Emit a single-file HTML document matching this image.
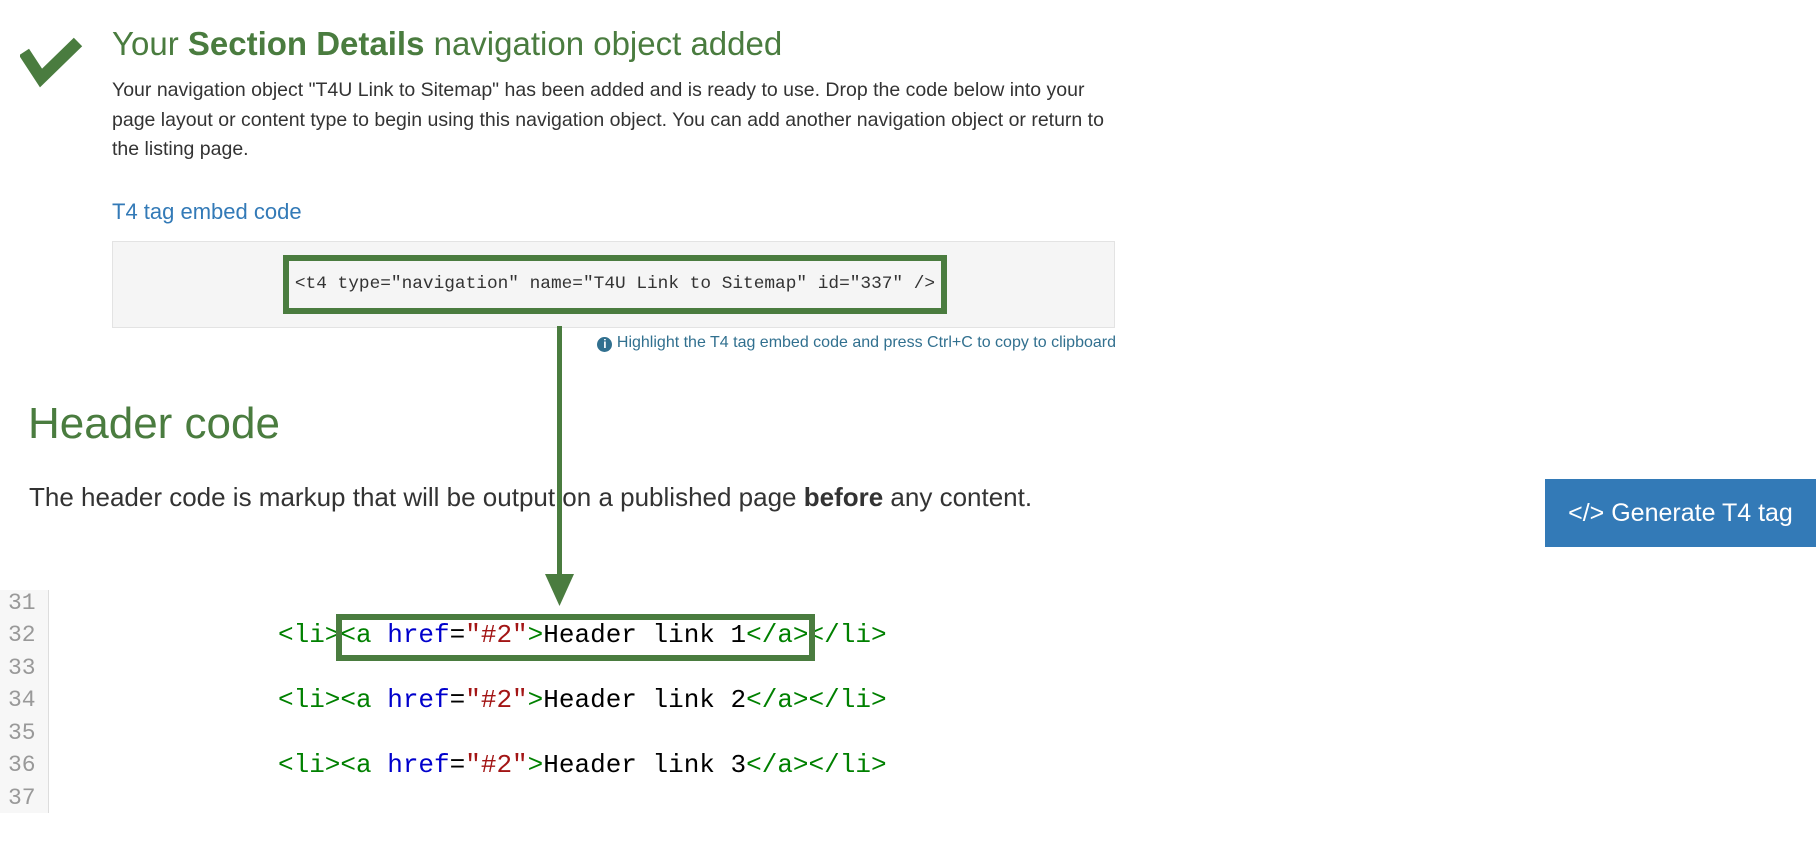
<!DOCTYPE html>
<html><head><meta charset="utf-8"><style>
body{margin:0;width:1816px;height:850px;background:#fff;position:relative;overflow:hidden;font-family:"Liberation Sans",Arial,sans-serif;}
.a{position:absolute;white-space:nowrap;}
.title{left:112px;top:25px;font-size:33px;color:#4a7c3f;}
.p{left:112px;top:76px;font-size:19.5px;line-height:29.6px;color:#333;width:1012px;white-space:normal;}
.sub{left:112px;top:199px;font-size:22px;color:#337ab7;}
.gray{left:112px;top:241px;width:1001px;height:85px;background:#f5f5f5;border:1px solid #e3e3e3;}
.gb{left:283px;top:255px;width:652px;height:47px;border:6px solid #4a7c3f;font-family:"Liberation Mono",monospace;font-size:17.8px;color:#333;line-height:47px;text-align:center;}
.hint{right:700px;top:334px;font-size:16px;color:#31708f;}
.h2{left:28px;top:399px;font-size:44px;color:#4a7c3f;}
.p2{left:29px;top:482px;font-size:26px;color:#333;}
.btn{left:1545px;top:479px;width:271px;height:68px;background:#337ab7;color:#fff;font-size:25px;line-height:68px;text-align:center;}
.gut{left:0;top:590px;width:48px;height:223px;background:#f7f7f7;border-right:1px solid #ddd;}
.ln{left:8px;font-family:"Liberation Mono",monospace;font-size:23px;color:#999;}
.code{left:278px;font-family:"Liberation Mono",monospace;font-size:26px;color:#000;}
.t{color:#008000}.k{color:#0000cc}.s{color:#a31515}
</style></head><body>
<svg class="a" style="left:20px;top:36px" width="64" height="56" viewBox="0 0 64 56"><path d="M4 16 L21 42 L58 6" stroke="#4a7c3f" stroke-width="12" fill="none" stroke-linejoin="miter"/></svg>
<div class="a title">Your <b>Section Details</b> navigation object added</div>
<div class="a p">Your navigation object "T4U Link to Sitemap" has been added and is ready to use. Drop the code below into your page layout or content type to begin using this navigation object. You can add another navigation object or return to the listing page.</div>
<div class="a sub">T4 tag embed code</div>
<div class="a gray"></div>
<div class="a gb">&lt;t4 type="navigation" name="T4U Link to Sitemap" id="337" /&gt;</div>
<div class="a hint"><span style="display:inline-block;width:15px;height:15px;border-radius:50%;background:#31708f;color:#fff;font-size:12px;line-height:15px;text-align:center;font-weight:bold;vertical-align:-1px">i</span> Highlight the T4 tag embed code and press Ctrl+C to copy to clipboard</div>
<div class="a h2">Header code</div>
<div class="a p2">The header code is markup that will be output on a published page <b>before</b> any content.</div>
<div class="a btn">&lt;/&gt; Generate T4 tag</div>
<div class="a gut"></div>
<div class="a ln" style="top:590px">31</div>
<div class="a ln" style="top:622px">32</div>
<div class="a ln" style="top:655px">33</div>
<div class="a ln" style="top:687px">34</div>
<div class="a ln" style="top:720px">35</div>
<div class="a ln" style="top:752px">36</div>
<div class="a ln" style="top:785px">37</div>
<div class="a code" style="top:620px"><span class="t">&lt;li&gt;&lt;a </span><span class="k">href</span>=<span class="s">"#2"</span><span class="t">&gt;</span>Header link 1<span class="t">&lt;/a&gt;&lt;/li&gt;</span></div>
<div class="a code" style="top:685px"><span class="t">&lt;li&gt;&lt;a </span><span class="k">href</span>=<span class="s">"#2"</span><span class="t">&gt;</span>Header link 2<span class="t">&lt;/a&gt;&lt;/li&gt;</span></div>
<div class="a code" style="top:750px"><span class="t">&lt;li&gt;&lt;a </span><span class="k">href</span>=<span class="s">"#2"</span><span class="t">&gt;</span>Header link 3<span class="t">&lt;/a&gt;&lt;/li&gt;</span></div>
<div class="a" style="left:336px;top:614px;width:467px;height:35px;border:6px solid #4a7c3f"></div>
<svg class="a" style="left:540px;top:326px" width="40" height="282"><line x1="19.5" y1="0" x2="19.5" y2="250" stroke="#4a7c3f" stroke-width="5"/><path d="M5 248 L34 248 L19.5 280 Z" fill="#4a7c3f"/></svg>
</body></html>
